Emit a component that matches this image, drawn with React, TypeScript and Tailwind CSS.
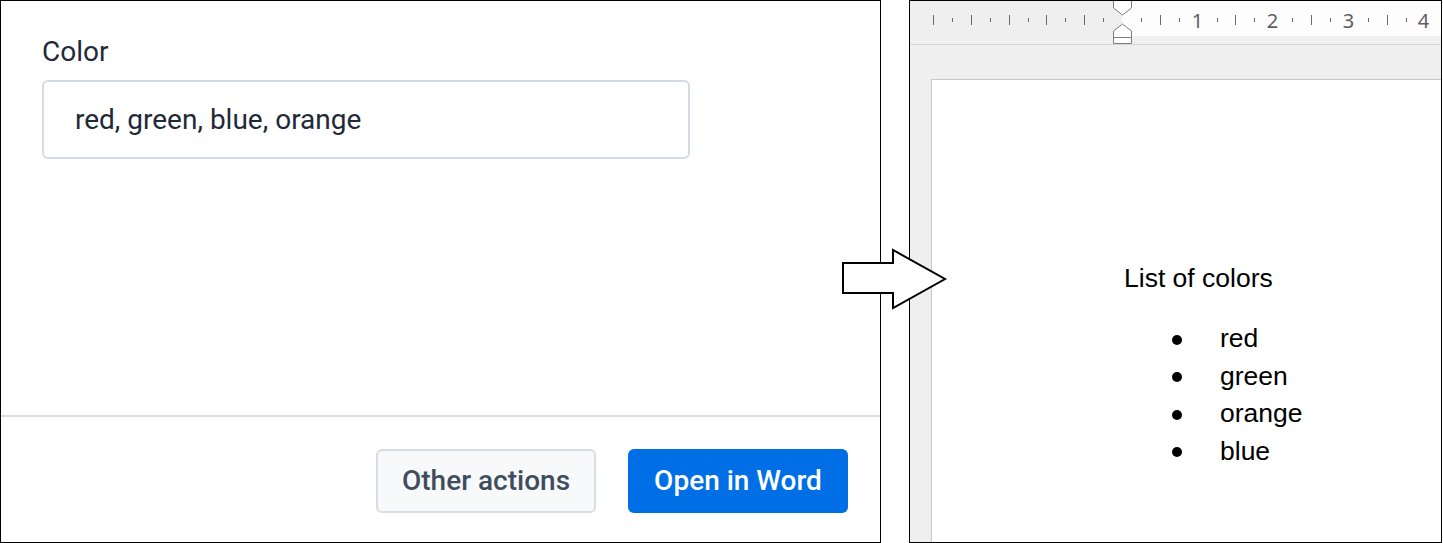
import React from "react";

function Ruler() {
  const ticks: React.ReactNode[] = [];
  for (let k = -10; k <= 16; k++) {
    if (k === 0) continue;
    const x = Math.round(212 + 18.9 * k) + 0.5;
    if (k > 0 && k % 4 === 0) {
      ticks.push(
        <text
          key={k}
          x={x - 1}
          y={26.5}
          textAnchor="middle"
          fontSize={20}
          fill="#5f5f5f"
          fontFamily="'Noto Sans', 'Open Sans', sans-serif"
        >
          {k / 4}
        </text>
      );
    } else if (k % 2 === 0) {
      ticks.push(<line key={k} x1={x} x2={x} y1={14} y2={24} stroke="#6b6b6b" strokeWidth={1} />);
    } else {
      ticks.push(<line key={k} x1={x} x2={x} y1={17} y2={21} stroke="#6b6b6b" strokeWidth={1} />);
    }
  }
  return (
    <svg width={531} height={43} className="block">
      <rect x={0} y={0} width={531} height={43} fill="#efefef" />
      <rect x={212} y={0} width={319} height={35} fill="#fdfdfd" />
      {ticks}
      <polygon points="203.5,-1 221.5,-1 221.5,7 212.5,14 203.5,7" fill="#ffffff" stroke="#7d7d7d" strokeWidth={1} />
      <polygon points="212.5,23 221.5,30 221.5,42.5 203.5,42.5 203.5,30" fill="#ffffff" stroke="#7d7d7d" strokeWidth={1} />
      <line x1={203.5} x2={221.5} y1={36.5} y2={36.5} stroke="#7d7d7d" strokeWidth={1} />
    </svg>
  );
}

export default function App() {
  const items = ["red", "green", "orange", "blue"];
  return (
    <div className="relative flex w-[1443px] h-[543px] bg-white">
      {/* Left panel */}
      <div
        className="flex flex-col w-[881px] h-full border border-black bg-white"
        style={{ fontFamily: "Roboto, 'Noto Sans', sans-serif" }}
      >
        <div className="flex-1 pl-[41px] pt-[35px]">
          <div className="text-[28px] leading-[32px] text-[#212a36]">Color</div>
          <div className="mt-[12px] w-[648px] h-[79px] border-2 border-[#d5dbe4] rounded-[6px] flex items-center pl-[31px] text-[28px] leading-[32px] text-[#1f2937]">
            red, green, blue, orange
          </div>
        </div>
        <div className="border-t-2 border-[#d9dfe8] flex justify-end gap-[32px] pt-[32px] pb-[29px] pr-[32px]">
          <button className="w-[220px] h-[64px] rounded-[6px] border-2 border-[#d7dde5] bg-[#f7f9fa] text-[28px] leading-[32px] font-medium text-[#3f4d5f]">
            Other actions
          </button>
          <button className="w-[220px] h-[64px] rounded-[6px] bg-[#006fe6] text-[28px] leading-[32px] font-medium text-white">
            Open in Word
          </button>
        </div>
      </div>

      <div className="w-[28px]" />

      {/* Right panel */}
      <div className="flex flex-col w-[533px] h-full border border-black bg-[#efefef] overflow-hidden">
        <div className="h-[44px] border-b border-[#d6d6d6]">
          <Ruler />
        </div>
        <div className="h-[34px]" />
        <div
          className="flex-1 ml-[21px] bg-white border-t border-l border-[#c8c8c8] pt-[180px] pl-[192px] text-black"
          style={{ fontFamily: "'Liberation Sans', Arial, sans-serif" }}
        >
          <div className="text-[26.5px] leading-[37.5px]">List of colors</div>
          <ul className="mt-[22.5px]">
            {items.map((it) => (
              <li key={it} className="flex items-center h-[37.5px] text-[26.5px] leading-[37.5px]">
                <span className="ml-[48px] w-[10px] h-[10px] rounded-full bg-black mt-[2px]" />
                <span className="ml-[38px]">{it}</span>
              </li>
            ))}
          </ul>
        </div>
      </div>

      {/* Arrow overlay */}
      <svg className="absolute left-0 top-0 pointer-events-none" width={1443} height={543}>
        <polygon
          points="843,263 893,263 893,250 945,279 893,308 893,293 843,293"
          fill="#ffffff"
          stroke="#000000"
          strokeWidth={2}
          strokeLinejoin="miter"
        />
      </svg>
    </div>
  );
}
